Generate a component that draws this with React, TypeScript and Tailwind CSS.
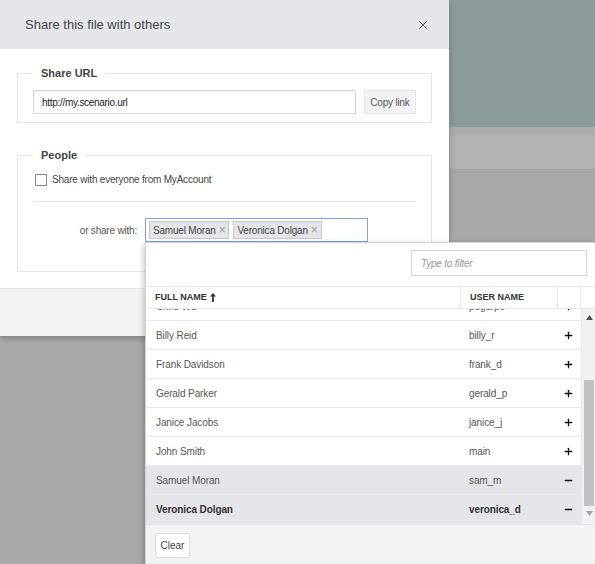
import { Plus, Minus, X } from 'lucide-react'

const users = [
  { name: 'Chris Wu', login: 'pugurpo', selected: false },
  { name: 'Billy Reid', login: 'billy_r', selected: false },
  { name: 'Frank Davidson', login: 'frank_d', selected: false },
  { name: 'Gerald Parker', login: 'gerald_p', selected: false },
  { name: 'Janice Jacobs', login: 'janice_j', selected: false },
  { name: 'John Smith', login: 'main', selected: false },
  { name: 'Samuel Moran', login: 'sam_m', selected: true },
  { name: 'Veronica Dolgan', login: 'veronica_d', selected: true, bold: true },
]

function Tag({ label }: { label: string }) {
  return (
    <span className="flex h-[18px] items-center gap-[3px] border border-[#c8c9cc] bg-[#e4e5e8] px-[3px] text-[10px] tracking-[-0.2px] text-[#444]">
      {label}
      <span className="text-[12px] leading-none text-[#999]">×</span>
    </span>
  )
}

function Background() {
  return (
    <div className="flex h-full flex-col">
      <div className="h-[127px] bg-[#8b9b9c]" />
      <div className="h-[8px] bg-[#ababab]" />
      <div className="h-[35px] border-b border-[#a2a2a2] bg-[#b3b3b3]" />
      <div className="flex-1 bg-[#a8a8a8]" />
    </div>
  )
}

function ShareDialog() {
  return (
    <div className="absolute left-0 top-0 w-[449px] bg-white shadow-[0_2px_6px_rgba(0,0,0,0.25)]">
      <div className="flex h-[49px] items-center justify-between bg-[#e5e6e9] pl-[25px] pr-[19px]">
        <span className="text-[13px] text-[#454545]">Share this file with others</span>
        <X className="h-[14px] w-[14px] text-[#555]" strokeWidth={1.6} />
      </div>

      <div className="px-[17px] pb-[16px] pt-[17px]">
        <fieldset className="border border-[#e4e5e7] px-[15px] pb-[8px]">
          <legend className="px-[8px] text-[11px] font-bold leading-[14px] text-[#444]">Share URL</legend>
          <div className="mt-[10px] flex gap-[8px]">
            <div className="flex h-[24px] flex-1 items-center border border-[#d5d6d9] px-[8px] text-[10px] tracking-[-0.3px] text-[#222] shadow-[inset_0_1px_1px_rgba(0,0,0,0.05)]">
              http://my.scenario.url
            </div>
            <button className="h-[24px] w-[52px] border border-[#e3e4e6] bg-[#f2f3f5] text-[10px] tracking-[-0.2px] text-[#555]">Copy link</button>
          </div>
        </fieldset>

        <fieldset className="mt-[25px] border border-[#e4e5e7] px-[15px] pb-[29px]">
          <legend className="px-[8px] text-[11px] font-bold leading-[14px] text-[#444]">People</legend>
          <label className="mt-[10px] flex items-center gap-[5px] pl-[2px] text-[10px] tracking-[-0.2px] text-[#444]">
            <span className="h-[12px] w-[12px] border border-[#888] bg-white" />
            Share with everyone from MyAccount
          </label>
          <div className="mt-[14px] border-t border-[#e4e5e7]" />
          <div className="mt-[16px] flex items-center">
            <span className="w-[104px] text-right text-[10px] tracking-[-0.2px] text-[#555]">or share with:</span>
            <div className="ml-[8px] flex h-[24px] w-[223px] items-center gap-[4px] border border-[#7aa6e8] px-[3px]">
              <Tag label="Samuel Moran" />
              <Tag label="Veronica Dolgan" />
            </div>
          </div>
        </fieldset>
      </div>

      <div className="h-[48px] border-t border-[#e4e5e7] bg-[#f2f3f5]" />
    </div>
  )
}

function ScrollBar() {
  return (
    <div className="flex w-[15px] flex-col items-center border-l border-[#e6e6e6] bg-[#f1f1f1]">
      <svg width="7" height="5" viewBox="0 0 7 5" className="mt-[6px]">
        <path d="M0 5 L3.5 0 L7 5 Z" fill="#505050" />
      </svg>
      <div className="mt-[60px] h-[126px] w-[10px] bg-[#c1c1c1]" />
      <svg width="7" height="5" viewBox="0 0 7 5" className="mt-[5px]">
        <path d="M0 0 L3.5 5 L7 0 Z" fill="#a3a3a3" />
      </svg>
    </div>
  )
}

function UserPicker() {
  return (
    <div className="absolute left-[145px] top-[242px] flex h-[330px] w-[452px] flex-col border border-[#d0d1d4] bg-white shadow-[-1px_2px_6px_rgba(0,0,0,0.25)]">
      <div className="flex h-[43px] justify-end pr-[9px] pt-[7px]">
        <div className="flex h-[26px] w-[176px] items-center border border-[#d5d6d9] px-[9px] text-[10px] italic tracking-[-0.2px] text-[#999]">
          Type to filter
        </div>
      </div>

      <div className="flex h-[23px] border-y border-[#e6e7ea] text-[9px] font-bold uppercase text-[#333]">
        <div className="flex w-[314px] items-center gap-[3px] pl-[9px]">
          Full name
          <svg width="6" height="9" viewBox="0 0 6 9">
            <path d="M3 0 L6 3.5 H3.9 V9 H2.1 V3.5 H0 Z" fill="#333" />
          </svg>
        </div>
        <div className="flex w-[97px] items-center border-l border-[#e6e7ea] pl-[9px]">User name</div>
        <div className="w-[23px] border-l border-[#e6e7ea]" />
        <div className="flex-1 border-l border-[#e6e7ea]" />
      </div>

      <div className="flex h-[215px]">
        <div className="flex-1 overflow-hidden">
          <div className="-mt-[17px]">
            {users.map((u) => (
              <div
                key={u.login}
                className={`flex h-[29px] items-center border-b border-[#e8e9ec] text-[10px] tracking-[-0.1px] ${
                  u.selected ? 'bg-[#e4e5e8]' : 'bg-white'
                } ${u.bold ? 'font-bold text-[#333]' : 'text-[#555]'}`}
              >
                <div className="w-[314px] pl-[10px]">{u.name}</div>
                <div className="w-[97px] pl-[9px]">{u.login}</div>
                <div className="flex w-[23px] justify-center">
                  {u.selected ? (
                    <Minus className="h-[11px] w-[11px] text-[#111]" strokeWidth={2.8} />
                  ) : (
                    <Plus className="h-[11px] w-[11px] text-[#111]" strokeWidth={2.8} />
                  )}
                </div>
              </div>
            ))}
          </div>
        </div>
        <ScrollBar />
      </div>

      <div className="flex-1 border-t border-[#e4e5e7] bg-[#f2f3f5] pl-[9px] pt-[7px]">
        <button className="h-[25px] w-[35px] rounded-[2px] border border-[#dcdcdc] bg-white text-[10px] text-[#444]">Clear</button>
      </div>
    </div>
  )
}

export default function App() {
  return (
    <div
      className="relative h-[564px] w-[595px] overflow-hidden"
      style={{ fontFamily: '"Liberation Sans", Arial, sans-serif' }}
    >
      <Background />
      <ShareDialog />
      <UserPicker />
    </div>
  )
}
